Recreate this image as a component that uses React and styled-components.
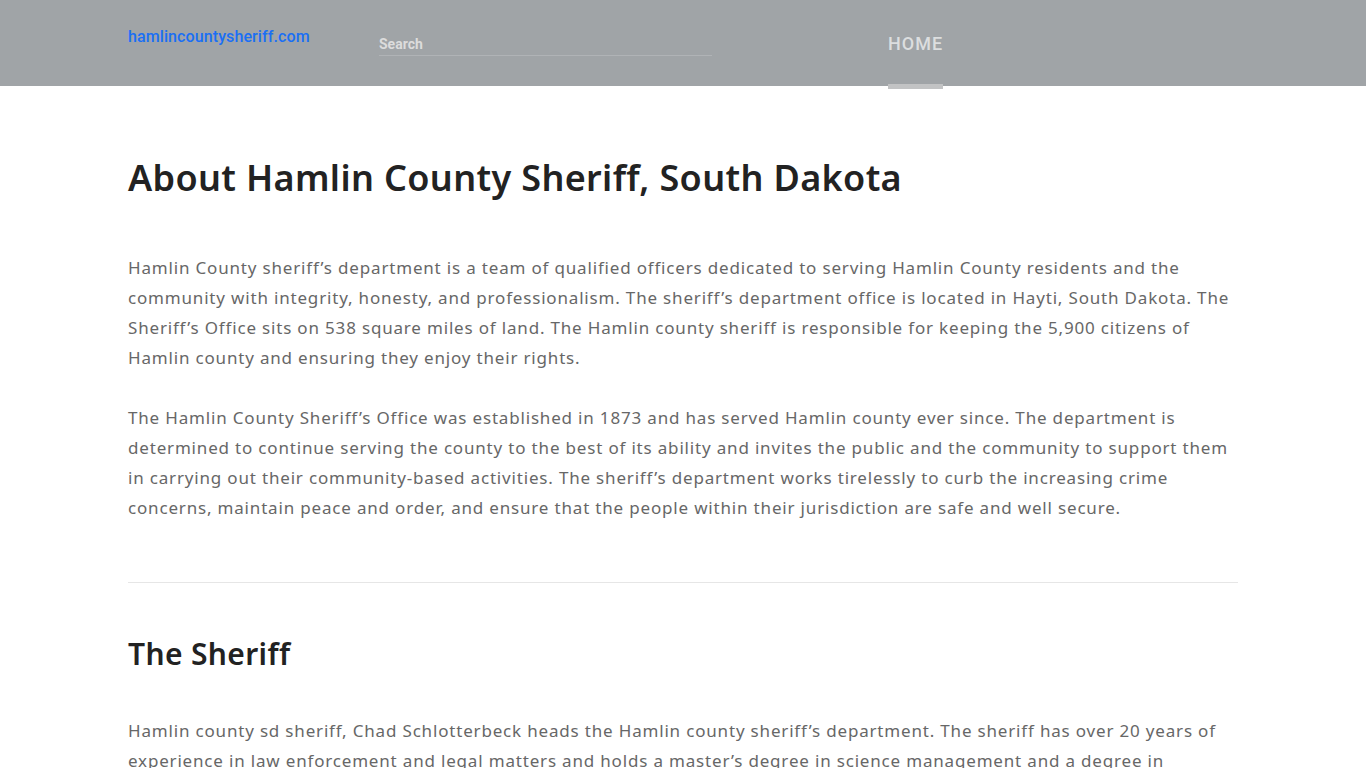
import React from "react";
import styled, { createGlobalStyle } from "styled-components";

const Global = createGlobalStyle`
  html, body { margin: 0; padding: 0; background: #fff; }
  body { font-family: "Noto Sans", "Open Sans", sans-serif; }
  * { box-sizing: border-box; }
`;

const Header = styled.header`
  position: relative;
  height: 86px;
  background: #a0a4a7;
`;

const HeaderInner = styled.div`
  width: 1110px;
  margin: 0 auto;
  height: 100%;
  display: flex;
  align-items: flex-start;
`;

const Logo = styled.a`
  font-family: Roboto, "Liberation Sans", sans-serif;
  font-weight: 500;
  font-size: 16px;
  letter-spacing: 0.1px;
  color: #1a6ff5;
  text-decoration: none;
  margin-top: 27px;
  width: 251px;
  flex: none;
`;

const SearchBox = styled.input`
  margin-top: 34px;
  width: 333px;
  height: 22px;
  border: none;
  border-bottom: 1px solid #b0b3b6;
  background: transparent;
  padding: 0 0 2px 0;
  font-family: Roboto, "Liberation Sans", sans-serif;
  font-weight: 700;
  font-size: 14px;
  color: #e0e0e0;
  outline: none;
  &::placeholder { color: #dcdcdc; }
`;

const Nav = styled.nav`
  margin-left: 176px;
  height: 100%;
  display: flex;
`;

const NavItem = styled.a`
  position: relative;
  font-family: Roboto, "Liberation Sans", sans-serif;
  font-weight: 500;
  font-size: 18px;
  letter-spacing: 1px;
  color: #dcdedf;
  text-decoration: none;
  padding-top: 33px;
  &::after {
    content: "";
    position: absolute;
    left: 0;
    right: 0;
    bottom: -3px;
    height: 5px;
    background: #c2c3c4;
  }
`;

const Main = styled.main`
  width: 1110px;
  margin: 0 auto;
  padding-top: 70px;
`;

const Section = styled.section`
  padding-bottom: ${(p) => p.$pb || 0}px;
`;

const Title = styled.h1`
  margin: ${(p) => p.$mt || 0}px 0 ${(p) => p.$mb}px;
  font-family: "Noto Sans", "DejaVu Sans", sans-serif;
  font-weight: 600;
  font-size: ${(p) => p.$size}px;
  line-height: 1.2;
  letter-spacing: 0.35px;
  color: #222222;
`;

const Para = styled.p`
  margin: 0 0 30px;
  font-family: "Noto Sans", "Open Sans", sans-serif;
  font-size: 17px;
  line-height: 30px;
  letter-spacing: 0.82px;
  color: #676767;
`;

const Rule = styled.hr`
  margin: 0;
  border: none;
  border-top: 1px solid #e6e6e6;
`;

export default function App() {
  return (
    <>
      <Global />
      <Header>
        <HeaderInner>
          <Logo href="#">hamlincountysheriff.com</Logo>
          <SearchBox placeholder="Search" />
          <Nav>
            <NavItem href="#">HOME</NavItem>
          </Nav>
        </HeaderInner>
      </Header>
      <Main>
        <Section $pb={29}>
          <Title $size={36} $mb={54}>About Hamlin County Sheriff, South Dakota</Title>
          <Para>
            Hamlin County sheriff’s department is a team of qualified officers dedicated to serving Hamlin County residents and the community with integrity, honesty, and professionalism. The sheriff’s department office is located in Hayti, South Dakota. The Sheriff’s Office sits on 538 square miles of land. The Hamlin county sheriff is responsible for keeping the 5,900 citizens of Hamlin county and ensuring they enjoy their rights.
          </Para>
          <Para>
            The Hamlin County Sheriff’s Office was established in 1873 and has served Hamlin county ever since. The department is determined to continue serving the county to the best of its ability and invites the public and the community to support them in carrying out their community-based activities. The sheriff’s department works tirelessly to curb the increasing crime concerns, maintain peace and order, and ensure that the people within their jurisdiction are safe and well secure.
          </Para>
        </Section>
        <Rule />
        <Section>
          <Title $size={30} $mt={53} $mb={44}>The Sheriff</Title>
          <Para>
            Hamlin county sd sheriff, Chad Schlotterbeck heads the Hamlin county sheriff’s department. The sheriff has over 20 years of experience in law enforcement and legal matters and holds a master’s degree in science management and a degree in criminal justice. He is committed to serving the people of Hamlin county with fairness and honesty.
          </Para>
        </Section>
      </Main>
    </>
  );
}
